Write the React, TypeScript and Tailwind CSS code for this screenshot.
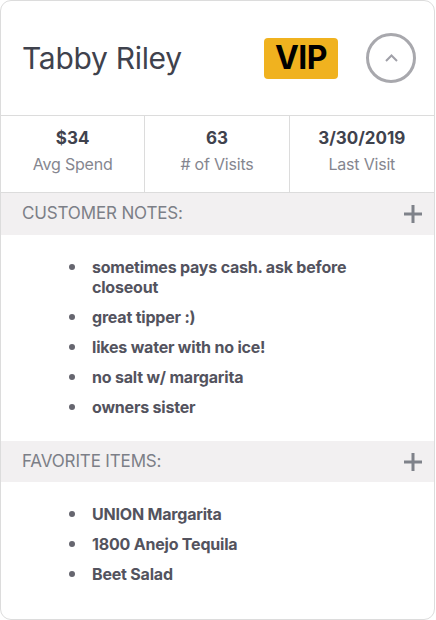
import React from "react";

const notes = [
  "sometimes pays cash. ask before closeout",
  "great tipper :)",
  "likes water with no ice!",
  "no salt w/ margarita",
  "owners sister",
];
const favs = ["UNION Margarita", "1800 Anejo Tequila", "Beet Salad"];

function Plus() {
  return (
    <svg width="18" height="18" viewBox="0 0 18 18">
      <rect x="0" y="7.5" width="18" height="3" fill="#7f828a" />
      <rect x="7.5" y="0" width="3" height="18" fill="#7f828a" />
    </svg>
  );
}

function SectionHeader({ title, h }: { title: string; h: string }) {
  return (
    <div className={`flex ${h} items-center justify-between bg-[#f2f0f1] pl-[21px] pr-[12px]`}>
      <span className="text-[17px] tracking-[-0.15px] text-[#7c7f87]">{title}</span>
      <Plus />
    </div>
  );
}

function Item({ text }: { text: string }) {
  return (
    <li className="flex items-start">
      <span className="mt-[7px] ml-[68px] h-[6px] w-[6px] shrink-0 rounded-full bg-[#66666f]" />
      <span className="ml-[17px] w-[300px] text-[16px] font-bold leading-[20px] tracking-[-0.2px] text-[#53535e]">
        {text}
      </span>
    </li>
  );
}

export default function App() {
  return (
    <div className="h-[620px] w-[436px] bg-white" style={{ fontFamily: "Inter, 'Noto Sans', sans-serif" }}>
      <div className="flex h-[620px] w-[435px] flex-col overflow-hidden rounded-[11px] border border-[#dcdcdc] bg-white">
        <div className="flex h-[115px] shrink-0 items-center border-b border-[#dcdcdc] pl-[21px] pr-[18px]">
          <span className="flex-1 text-[30px] leading-none tracking-[-0.3px] text-[#3f424d]">Tabby Riley</span>
          <span className="flex h-[41px] w-[74px] items-center justify-center rounded-[4px] bg-[#f0b21f] text-[32px] font-bold leading-none tracking-[-0.5px] text-black">
            VIP
          </span>
          <span className="ml-[28px] flex h-[50px] w-[50px] items-center justify-center rounded-full border-[3px] border-[#a8a8ad]">
            <svg width="13" height="8" viewBox="0 0 13 8">
              <path d="M1 7 L6.5 1.5 L12 7" fill="none" stroke="#a0a0a8" strokeWidth="2" />
            </svg>
          </span>
        </div>
        <div className="grid h-[77px] shrink-0 grid-cols-3 border-b border-[#dcdcdc]">
          {[
            ["$34", "Avg Spend"],
            ["63", "# of Visits"],
            ["3/30/2019", "Last Visit"],
          ].map(([v, l], i) => (
            <div
              key={l}
              className={`flex flex-col items-center pt-[11px] ${i < 2 ? "border-r border-[#dcdcdc]" : ""}`}
            >
              <span className="text-[17px] font-bold leading-[22px] text-[#3f424d]">{v}</span>
              <span className="mt-[5px] text-[16px] leading-[20px] tracking-[-0.2px] text-[#85868f]">{l}</span>
            </div>
          ))}
        </div>
        <SectionHeader title="CUSTOMER NOTES:" h="h-[42px] shrink-0" />
        <ul className="flex h-[206px] shrink-0 flex-col gap-[10px] pt-[22px]">
          {notes.map((n) => (
            <Item key={n} text={n} />
          ))}
        </ul>
        <SectionHeader title="FAVORITE ITEMS:" h="h-[41px] shrink-0" />
        <ul className="flex flex-col gap-[10px] pt-[22px]">
          {favs.map((n) => (
            <Item key={n} text={n} />
          ))}
        </ul>
      </div>
    </div>
  );
}
